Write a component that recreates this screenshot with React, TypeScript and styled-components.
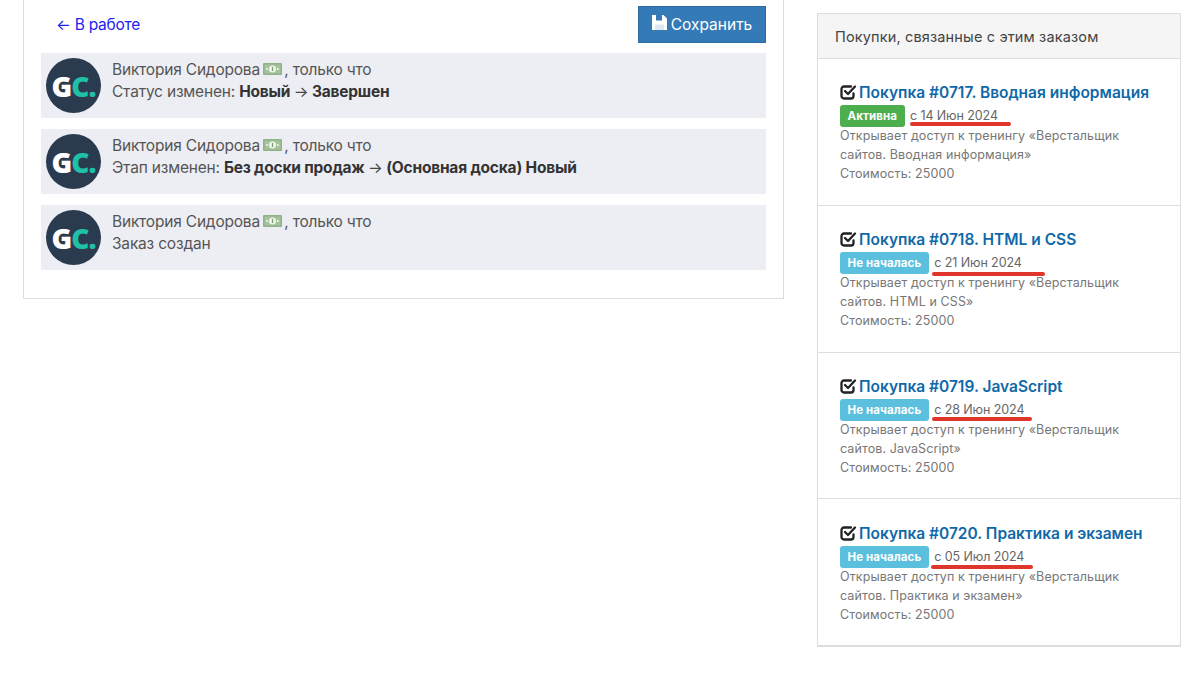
import React from "react";
import styled, { createGlobalStyle } from "styled-components";

const GlobalStyle = createGlobalStyle`
  html, body {
    margin: 0;
    padding: 0;
    background: #fff;
    font-family: Inter, "Open Sans", sans-serif;
    color: #555;
  }
`;

const Page = styled.div`
  display: flex;
  align-items: flex-start;
  gap: 33px;
  padding-left: 23px;
  width: 1200px;
  height: 680px;
  box-sizing: border-box;
  overflow: hidden;
`;

const OrderPanel = styled.div`
  width: 761px;
  box-sizing: border-box;
  padding: 0 17px 28px;
  border: 1px solid #ddd;
  border-top: none;
`;

const Toolbar = styled.div`
  display: flex;
  align-items: flex-start;
  justify-content: space-between;
  height: 53px;
  padding: 6px 0 0 15px;
  box-sizing: border-box;
`;

const BackLink = styled.a`
  color: #2222ee;
  font-size: 15.5px;
  line-height: 22px;
  margin-top: 8px;
  letter-spacing: -0.25px;
  text-decoration: none;
`;

const SaveButton = styled.button`
  display: flex;
  align-items: center;
  justify-content: center;
  gap: 4px;
  width: 128px;
  height: 37px;
  padding: 0;
  background: #337ab7;
  border: 1px solid #2e6da4;
  color: #fff;
  font: inherit;
  font-size: 15.5px;
`;

const LogList = styled.div`
  display: flex;
  flex-direction: column;
  gap: 11px;
`;

const LogEntry = styled.div`
  display: flex;
  align-items: center;
  gap: 11px;
  height: 65px;
  padding-left: 5px;
  background: #edeef3;
`;

const Avatar = styled.div`
  display: flex;
  align-items: center;
  justify-content: center;
  width: 55px;
  height: 55px;
  border-radius: 50%;
  background: #2b3b4f;
  font-family: "Open Sans", sans-serif;
  font-size: 28px;
  font-weight: 800;
  letter-spacing: -1px;
  color: #fff;
`;

const AvatarAccent = styled.span`
  color: #1fbfa8;
`;

const LogText = styled.div`
  align-self: flex-start;
  padding-top: 6px;
  font-size: 15.5px;
  line-height: 22px;
  letter-spacing: -0.2px;
  color: #555;
`;

const Strong = styled.b`
  font-weight: 700;
  color: #333;
`;

const Arrow = styled.span`
  font-weight: 400;
  color: #444;
`;

const MoneyWrap = styled.span`
  margin: 0 -2px 0 -1px;
`;

const SidePanel = styled.div`
  width: 364px;
  margin-top: 13px;
  box-sizing: border-box;
  border: 1px solid #ddd;
  border-bottom-width: 2px;
`;

const SideHeader = styled.div`
  height: 45px;
  box-sizing: border-box;
  padding: 0 17px;
  display: flex;
  align-items: center;
  background: #f5f5f5;
  border-bottom: 1px solid #ddd;
  font-size: 14.5px;
  letter-spacing: 0.15px;
  color: #444;
`;

const Purchase = styled.div`
  height: 147px;
  box-sizing: border-box;
  padding: 22px 22px 0;
  border-bottom: 1px solid #ddd;
  &:nth-child(4) {
    height: 146px;
  }
  &:last-child {
    height: 146px;
    padding-top: 23px;
    border-bottom: none;
  }
`;

const PurchaseTitle = styled.div`
  display: flex;
  align-items: center;
  gap: 2px;
  height: 22px;
  font-size: 15.5px;
  font-weight: 600;
  color: #0f68a8;
  white-space: nowrap;
`;

const StatusRow = styled.div`
  position: relative;
  display: flex;
  align-items: center;
  gap: 5.4px;
  height: 22px;
  margin-top: 2px;
`;

const Badge = styled.span<{ $tone: string }>`
  display: inline-block;
  height: 22px;
  line-height: 22px;
  padding: 0 7.5px;
  border-radius: 3px;
  background: ${(p) => p.$tone};
  color: #fff;
  font-size: 11.5px;
  font-weight: 700;
  letter-spacing: 0.1px;
`;

const DateText = styled.span`
  margin-bottom: 2px;
  font-size: 12.5px;
  letter-spacing: -0.1px;
  color: #666;
`;

const Underline = styled.span<{ $left: number; $width: number; $top: number }>`
  position: absolute;
  left: ${(p) => p.$left}px;
  top: ${(p) => p.$top}px;
  width: ${(p) => p.$width}px;
  height: 4px;
  border-radius: 2px;
  background: #e0352b;
`;

const Description = styled.div`
  margin-top: -1px;
  font-size: 12.5px;
  line-height: 19px;
  letter-spacing: 0.1px;
  color: #777;
`;

const CheckIcon = () => (
  <svg width="17" height="16" viewBox="0 0 17 16" fill="none" stroke="#222" strokeWidth="2.3" strokeLinecap="round" strokeLinejoin="round">
    <path d="M13.5 9.5V12a2.5 2.5 0 0 1-2.5 2.5H4A2.5 2.5 0 0 1 1.5 12V5A2.5 2.5 0 0 1 4 2.5h7" />
    <path d="M5 7l3 3 7-7.5" />
  </svg>
);

const SaveIcon = () => (
  <svg width="15" height="15" viewBox="0 0 15 15" style={{ marginTop: -4 }}>
    <path fill="#fff" fillRule="evenodd" d="M0 0h11.5L15 3.5V15H0zM4 0h6v5.5H4z" />
    <rect x="3" y="9.5" width="9" height="5.5" fill="#dbe7f2" />
  </svg>
);

const MoneyIcon = () => (
  <MoneyWrap>
    <svg width="19" height="12" viewBox="0 0 19 12">
      <rect width="19" height="12" rx="1" fill="#8fb287" />
      <rect x="1.5" y="1.5" width="16" height="9" fill="#a5c29c" />
      <circle cx="9.5" cy="6" r="3.6" fill="#eef3e8" />
      <rect x="8.9" y="4" width="1.2" height="4" fill="#7a9c72" />
      <rect x="3" y="5" width="2" height="2" fill="#dfe9d8" />
      <rect x="14" y="5" width="2" height="2" fill="#dfe9d8" />
    </svg>
  </MoneyWrap>
);

const logs = [
  { label: "Статус изменен: ", from: "Новый", to: "Завершен" },
  { label: "Этап изменен: ", from: "Без доски продаж", to: "(Основная доска) Новый" },
  { label: "Заказ создан", from: "", to: "" },
];

const purchases = [
  { title: "Покупка #0717. Вводная информация", status: "Активна", tone: "#4cae4c", date: "с 14 Июн 2024", left: 70, width: 101, top: 17, course: "Вводная информация" },
  { title: "Покупка #0718. HTML и CSS", status: "Не началась", tone: "#5bc0de", date: "с 21 Июн 2024", left: 92, width: 113, top: 20, course: "HTML и CSS" },
  { title: "Покупка #0719. JavaScript", status: "Не началась", tone: "#5bc0de", date: "с 28 Июн 2024", left: 92, width: 100, top: 18, course: "JavaScript" },
  { title: "Покупка #0720. Практика и экзамен", status: "Не началась", tone: "#5bc0de", date: "с 05 Июл 2024", left: 91, width: 102, top: 19, course: "Практика и экзамен" },
];

export default function App() {
  return (
    <Page>
      <GlobalStyle />
      <OrderPanel>
        <Toolbar>
          <BackLink href="#">← В работе</BackLink>
          <SaveButton>
            <SaveIcon />
            Сохранить
          </SaveButton>
        </Toolbar>
        <LogList>
          {logs.map((log) => (
            <LogEntry key={log.label}>
              <Avatar>
                G<AvatarAccent>C.</AvatarAccent>
              </Avatar>
              <LogText>
                <div>
                  Виктория Сидорова <MoneyIcon /> , только что
                </div>
                <div>
                  {log.label}
                  {log.from && (
                    <Strong>
                      {log.from} <Arrow>→</Arrow> {log.to}
                    </Strong>
                  )}
                </div>
              </LogText>
            </LogEntry>
          ))}
        </LogList>
      </OrderPanel>
      <SidePanel>
        <SideHeader>Покупки, связанные с этим заказом</SideHeader>
        {purchases.map((item) => (
          <Purchase key={item.title}>
            <PurchaseTitle>
              <CheckIcon />
              {item.title}
            </PurchaseTitle>
            <StatusRow>
              <Badge $tone={item.tone}>{item.status}</Badge>
              <DateText>{item.date}</DateText>
              <Underline $left={item.left} $width={item.width} $top={item.top} />
            </StatusRow>
            <Description>
              Открывает доступ к тренингу «Верстальщик
              <br />
              сайтов. {item.course}»
              <br />
              Стоимость: 25000
            </Description>
          </Purchase>
        ))}
      </SidePanel>
    </Page>
  );
}
